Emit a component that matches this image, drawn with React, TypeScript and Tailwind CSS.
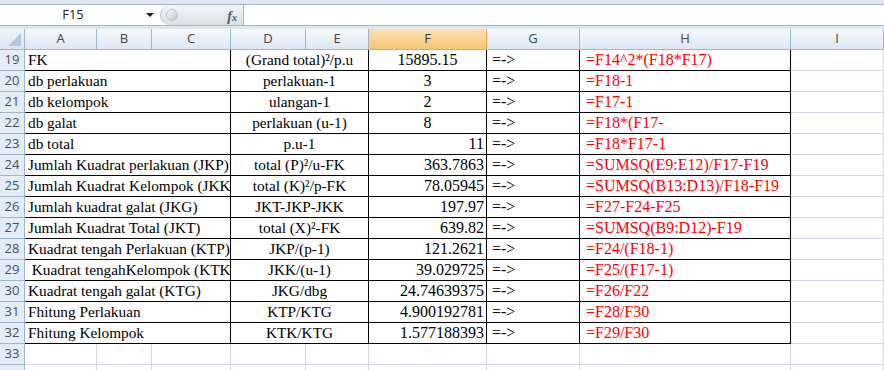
import React from "react";

type Row = {
  n: number;
  a: string;
  d: string;
  f: string;
  fAlign: "center" | "right";
  h: string;
};

const rows: Row[] = [
  { n: 19, a: "FK", d: "(Grand total)²/p.u", f: "15895.15", fAlign: "center", h: "=F14^2*(F18*F17)" },
  { n: 20, a: "db perlakuan", d: "perlakuan-1", f: "3", fAlign: "center", h: "=F18-1" },
  { n: 21, a: "db kelompok", d: "ulangan-1", f: "2", fAlign: "center", h: "=F17-1" },
  { n: 22, a: "db galat", d: "perlakuan (u-1)", f: "8", fAlign: "center", h: "=F18*(F17-" },
  { n: 23, a: "db total", d: "p.u-1", f: "11", fAlign: "right", h: "=F18*F17-1" },
  { n: 24, a: "Jumlah Kuadrat perlakuan (JKP)", d: "total (P)²/u-FK", f: "363.7863", fAlign: "right", h: "=SUMSQ(E9:E12)/F17-F19" },
  { n: 25, a: "Jumlah Kuadrat Kelompok (JKK)", d: "total (K)²/p-FK", f: "78.05945", fAlign: "right", h: "=SUMSQ(B13:D13)/F18-F19" },
  { n: 26, a: "Jumlah kuadrat galat (JKG)", d: "JKT-JKP-JKK", f: "197.97", fAlign: "right", h: "=F27-F24-F25" },
  { n: 27, a: "Jumlah Kuadrat Total (JKT)", d: "total (X)²-FK", f: "639.82", fAlign: "right", h: "=SUMSQ(B9:D12)-F19" },
  { n: 28, a: "Kuadrat tengah Perlakuan (KTP)", d: "JKP/(p-1)", f: "121.2621", fAlign: "right", h: "=F24/(F18-1)" },
  { n: 29, a: "\u00a0Kuadrat tengahKelompok (KTK)", d: "JKK/(u-1)", f: "39.029725", fAlign: "right", h: "=F25/(F17-1)" },
  { n: 30, a: "Kuadrat tengah galat (KTG)", d: "JKG/dbg", f: "24.74639375", fAlign: "right", h: "=F26/F22" },
  { n: 31, a: "Fhitung Perlakuan", d: "KTP/KTG", f: "4.900192781", fAlign: "right", h: "=F28/F30" },
  { n: 32, a: "Fhitung Kelompok", d: "KTK/KTG", f: "1.577188393", fAlign: "right", h: "=F29/F30" },
];

const serif = { fontFamily: '"Liberation Serif", "Times New Roman", serif' };
const sans = { fontFamily: '"Open Sans", "Liberation Sans", sans-serif' };

function RowHeader({ n }: { n?: number }) {
  return (
    <div
      className="h-[21px] border-r border-b border-[#9eb6ce] bg-[#e4ecf7] flex items-center justify-center text-[13px] text-[#3d4f66]"
      style={sans}
    >
      {n}
    </div>
  );
}

function ColHeader({ label, selected }: { label: string; selected?: boolean }) {
  return (
    <div
      className={
        "h-[21px] border-r border-b flex items-center justify-center text-[13px] " +
        (selected
          ? "bg-gradient-to-b from-[#fbe3b5] to-[#f6c56e] border-[#f2a64a] text-[#3a3a3a]"
          : "bg-gradient-to-b from-[#f7f9fc] to-[#dde6f3] border-[#9eb6ce] text-[#444]")
      }
      style={sans}
    >
      {label}
    </div>
  );
}

const cols = ["A", "B", "C", "D", "E", "F", "G", "H", "I"];

export default function App() {
  return (
    <div className="w-[884px] h-[370px] overflow-hidden bg-white">
      {/* Formula bar */}
      <div className="h-[29px] bg-[#dfe7f2] pt-[4px] pb-[3px]">
        <div className="flex h-[22px] border-t border-b border-[#a3b6cd] bg-white">
          <div className="relative w-[160px] flex items-center justify-center text-[13px] text-[#222]" style={sans}>
            <span className="mr-[14px]">F15</span>
            <span className="absolute left-[146px] top-[8px] w-0 h-0 border-l-[4px] border-r-[4px] border-t-[4px] border-l-transparent border-r-transparent border-t-[#222]" />
          </div>
          <div className="relative w-[83px] h-full flex items-center bg-gradient-to-b from-[#f4f6f9] to-[#d9dee6] rounded-l-[11px] border-l border-[#b3bfce]">
            <span className="ml-[5px] w-[12px] h-[12px] rounded-full bg-gradient-to-br from-[#ffffff] to-[#b9c2cd] border border-[#b9c3cf]" />
            <span className="absolute right-[6px] top-[1px] text-[14px] italic font-bold text-[#555]" style={serif}>
              f<span className="text-[10px]">x</span>
            </span>
          </div>
          <div className="flex-1 border-l border-[#a3b6cd] bg-white" />
        </div>
      </div>

      {/* Sheet */}
      <div className="grid grid-cols-[25px_72px_55px_79px_75px_63px_118px_93px_211px_93px]">
        {/* corner */}
        <div className="relative h-[21px] border-r border-b border-[#9eb6ce] bg-gradient-to-b from-[#eef3f9] to-[#dbe4f1]">
          <svg className="absolute right-[3px] bottom-[3px]" width="13" height="13" viewBox="0 0 13 13">
            <polygon points="13,0 13,13 0,13" fill="#b5c6dc" />
          </svg>
        </div>
        {cols.map((c) => (
          <ColHeader key={c} label={c} selected={c === "F"} />
        ))}

        {rows.map((r) => (
          <React.Fragment key={r.n}>
            <RowHeader n={r.n} />
            <div
              className="col-span-3 h-[21px] border-r border-b border-black flex items-end pl-[3px] pb-[1px] overflow-hidden whitespace-nowrap text-[15.3px] leading-[18px] text-black"
              style={serif}
            >
              {r.a}
            </div>
            <div
              className="col-span-2 h-[21px] border-r border-b border-black flex items-end justify-center pb-[1px] overflow-hidden whitespace-nowrap text-[15.3px] leading-[18px] text-black"
              style={serif}
            >
              {r.d}
            </div>
            <div
              className={
                "h-[21px] border-r border-b border-black flex items-end pb-[1px] overflow-hidden whitespace-nowrap text-[16px] leading-[18px] text-black " +
                (r.fAlign === "center" ? "justify-center" : "justify-end pr-[2px]")
              }
              style={serif}
            >
              {r.f}
            </div>
            <div
              className="h-[21px] border-r border-b border-black flex items-end pl-[5px] pb-[1px] whitespace-nowrap text-[16px] leading-[18px] text-black"
              style={serif}
            >
              =-&gt;
            </div>
            <div
              className="h-[21px] border-r border-b border-black flex items-end pl-[6px] pb-[1px] overflow-hidden whitespace-nowrap text-[16px] leading-[18px] text-[#ff0000]"
              style={serif}
            >
              {r.h}
            </div>
            <div className="h-[21px] border-r border-b border-[#d0d7e5]" />
          </React.Fragment>
        ))}

        <RowHeader n={33} />
        {cols.map((c) => (
          <div key={"33" + c} className="h-[21px] border-r border-b border-[#d0d7e5]" />
        ))}
        <RowHeader />
        {cols.map((c) => (
          <div key={"34" + c} className="h-[21px] border-r border-b border-[#d0d7e5]" />
        ))}
      </div>
    </div>
  );
}
